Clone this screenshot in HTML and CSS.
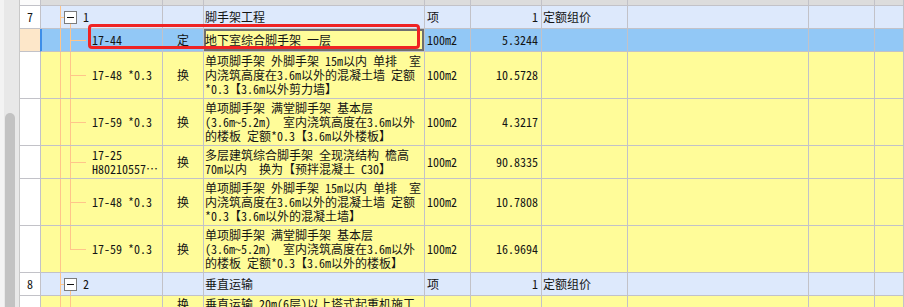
FILE: index.html
```html
<!DOCTYPE html>
<html lang="zh-CN">
<head>
<meta charset="utf-8">
<title>定额</title>
<link rel="stylesheet" href="styles.css">
</head>
<body>
<div class="screen">
  <div class="vscroll"><div class="thumb"></div></div>
  <div class="grid">
    <div class="row hdr">
      <div class="c num"></div><div class="c tree"></div><div class="c"></div><div class="c"></div><div class="c"></div><div class="c"></div><div class="c"></div><div class="c"></div><div class="c"></div><div class="c"></div>
    </div>

    <div class="row h1 group">
      <div class="c num">7</div>
      <div class="c tree grp"><span class="tog"></span><span class="glabel">1</span></div>
      <div class="c type"></div>
      <div class="c name">脚手架工程</div>
      <div class="c unit">项</div>
      <div class="c qty">1</div>
      <div class="c text">定额组价</div>
      <div class="c"></div><div class="c"></div><div class="c"></div>
    </div>

    <div class="row h1 sel">
      <div class="c num"></div>
      <div class="c tree child"><span class="code">17-44</span></div>
      <div class="c type">定</div>
      <div class="c name edit">地下室综合脚手架 一层</div>
      <div class="c unit">100m2</div>
      <div class="c qty">5.3244</div>
      <div class="c"></div><div class="c"></div><div class="c"></div><div class="c"></div>
    </div>

    <div class="row h3 item">
      <div class="c num"></div>
      <div class="c tree child"><span class="code">17-48 *0.3</span></div>
      <div class="c type">换</div>
      <div class="c name">单项脚手架 外脚手架 15m以内 单排  室<br>内浇筑高度在3.6m以外的混凝土墙 定额<br>*0.3【3.6m以外剪力墙】</div>
      <div class="c unit">100m2</div>
      <div class="c qty">10.5728</div>
      <div class="c"></div><div class="c"></div><div class="c"></div><div class="c"></div>
    </div>

    <div class="row h3 item">
      <div class="c num"></div>
      <div class="c tree child"><span class="code">17-59 *0.3</span></div>
      <div class="c type">换</div>
      <div class="c name">单项脚手架 满堂脚手架 基本层<br>(3.6m~5.2m)  室内浇筑高度在3.6m以外<br>的楼板 定额*0.3【3.6m以外楼板】</div>
      <div class="c unit">100m2</div>
      <div class="c qty">4.3217</div>
      <div class="c"></div><div class="c"></div><div class="c"></div><div class="c"></div>
    </div>

    <div class="row h2 item">
      <div class="c num"></div>
      <div class="c tree child"><span class="code">17-25<br>H80210557…</span></div>
      <div class="c type">换</div>
      <div class="c name">多层建筑综合脚手架 全现浇结构 檐高<br>70m以内  换为【预拌混凝土 C30】</div>
      <div class="c unit">100m2</div>
      <div class="c qty">90.8335</div>
      <div class="c"></div><div class="c"></div><div class="c"></div><div class="c"></div>
    </div>

    <div class="row h3 item">
      <div class="c num"></div>
      <div class="c tree child"><span class="code">17-48 *0.3</span></div>
      <div class="c type">换</div>
      <div class="c name">单项脚手架 外脚手架 15m以内 单排  室<br>内浇筑高度在3.6m以外的混凝土墙 定额<br>*0.3【3.6m以外的混凝土墙】</div>
      <div class="c unit">100m2</div>
      <div class="c qty">10.7808</div>
      <div class="c"></div><div class="c"></div><div class="c"></div><div class="c"></div>
    </div>

    <div class="row h3 item">
      <div class="c num"></div>
      <div class="c tree child last"><span class="code">17-59 *0.3</span></div>
      <div class="c type">换</div>
      <div class="c name">单项脚手架 满堂脚手架 基本层<br>(3.6m~5.2m)  室内浇筑高度在3.6m以外<br>的楼板 定额*0.3【3.6m以外的楼板】</div>
      <div class="c unit">100m2</div>
      <div class="c qty">16.9694</div>
      <div class="c"></div><div class="c"></div><div class="c"></div><div class="c"></div>
    </div>

    <div class="row h1 group">
      <div class="c num">8</div>
      <div class="c tree grp"><span class="tog"></span><span class="glabel">2</span></div>
      <div class="c type"></div>
      <div class="c name">垂直运输</div>
      <div class="c unit">项</div>
      <div class="c qty">1</div>
      <div class="c text">定额组价</div>
      <div class="c"></div><div class="c"></div><div class="c"></div>
    </div>

    <div class="row h2 item top">
      <div class="c num"></div>
      <div class="c tree child pass"></div>
      <div class="c type">换</div>
      <div class="c name">垂直运输 20m(6层)以上塔式起重机施工</div>
      <div class="c unit"></div>
      <div class="c qty"></div>
      <div class="c"></div><div class="c"></div><div class="c"></div><div class="c"></div>
    </div>
  </div>
  <div class="mark"></div>
</div>
</body>
</html>
```

FILE: styles.css
```css
html, body {
  margin: 0;
  padding: 0;
  background: #ffffff;
}

.screen {
  --line: #c2c2c8;
  --tl: #ffc58a;
  position: relative;
  width: 904px;
  height: 307px;
  overflow: hidden;
  display: flex;
  font-family: "Noto Sans Mono CJK SC", "Noto Sans CJK SC", sans-serif;
  font-size: 12px;
  line-height: 14px;
  color: #141414;
}

.vscroll {
  width: 15px;
  flex: none;
  background: #e8e8e8;
  border-left: 4px solid #f3f3f3;
  border-right: 1px solid #c8c8c8;
  padding-top: 113px;
  box-sizing: content-box;
}

.thumb {
  width: 10px;
  height: 260px;
  margin-left: 1px;
  background: #c2c2c2;
  border-radius: 5px 5px 0 0;
}

.grid {
  flex: 1;
  display: flex;
  flex-direction: column;
}

.row {
  display: grid;
  grid-template-columns: 21px 122px 41px 221px 46px 71px 86px 181px 66px 1fr;
  flex: none;
}

.hdr { height: 6px; }
.h1 { height: 23px; }
.h2 { height: 33px; }
.h3 { height: 47px; }

.c {
  box-sizing: border-box;
  border-right: 1px solid var(--line);
  border-bottom: 1px solid var(--line);
  display: flex;
  align-items: center;
  white-space: pre;
  overflow: hidden;
  min-width: 0;
}

.hdr .c { background: #dcdcdc; }
.hdr .num { background: #fbfbfb; }

.num {
  justify-content: center;
  background: #ffffff;
}

.group .c { background: #dde9fc; }
.group .num { background: #ffffff; }
.sel .c { background: #92c8f6; }
.sel .num {
  background: #fde7c9;
  border-right-color: #3d8ee8;
}
.item .c { background: #fffc99; }
.item .num { background: #ffffff; }

.tree {
  background-image: linear-gradient(var(--tl), var(--tl));
  background-position: 19px 0;
  background-size: 1px 100%;
  background-repeat: no-repeat;
}

.group .tree.grp {
  background-image:
    linear-gradient(var(--tl), var(--tl)),
    linear-gradient(var(--tl), var(--tl)),
    linear-gradient(var(--tl), var(--tl));
  background-position: 19px 0, 19px 11px, 29px 100%;
  background-size: 1px 100%, 4px 1px, 1px 5px;
  background-repeat: no-repeat;
}

.item .tree.child,
.sel .tree.child {
  background-image:
    linear-gradient(var(--tl), var(--tl)),
    linear-gradient(var(--tl), var(--tl)),
    linear-gradient(var(--tl), var(--tl));
  background-position: 19px 0, 29px 0, 29px 50%;
  background-size: 1px 100%, 1px 100%, 16px 1px;
  background-repeat: no-repeat;
}

.sel .tree.child { box-shadow: inset 1px 0 0 #3d8ee8; }

.item .tree.child.last {
  background-size: 1px 100%, 1px 50%, 16px 1px;
}

.item .tree.child.pass {
  background-size: 1px 100%, 1px 100%, 0 0;
}

.tog {
  position: relative;
  box-sizing: border-box;
  width: 13px;
  height: 13px;
  margin-left: 23px;
  border: 1px solid #7c7c7c;
  background: #ffffff;
  flex: none;
}

.tog::after {
  content: "";
  position: absolute;
  left: 2px;
  top: 5px;
  width: 7px;
  height: 1px;
  background: #111111;
}

.glabel { margin-left: 6px; }

.code { padding-left: 51px; }

.type { justify-content: center; }

.name { padding-left: 1px; }

.name.edit {
  background: #fffc99;
  box-shadow: inset 0 0 0 2px #6f6f6f;
}

.unit { padding-left: 2px; }

.qty {
  justify-content: flex-end;
  padding-right: 3px;
}

.text { padding-left: 1px; }

.top .c { align-items: flex-start; padding-top: 1px; }

.mark {
  position: absolute;
  left: 88px;
  top: 24px;
  width: 332px;
  height: 25px;
  box-sizing: border-box;
  border: 3px solid #ef2323;
  border-radius: 4px;
}
```
